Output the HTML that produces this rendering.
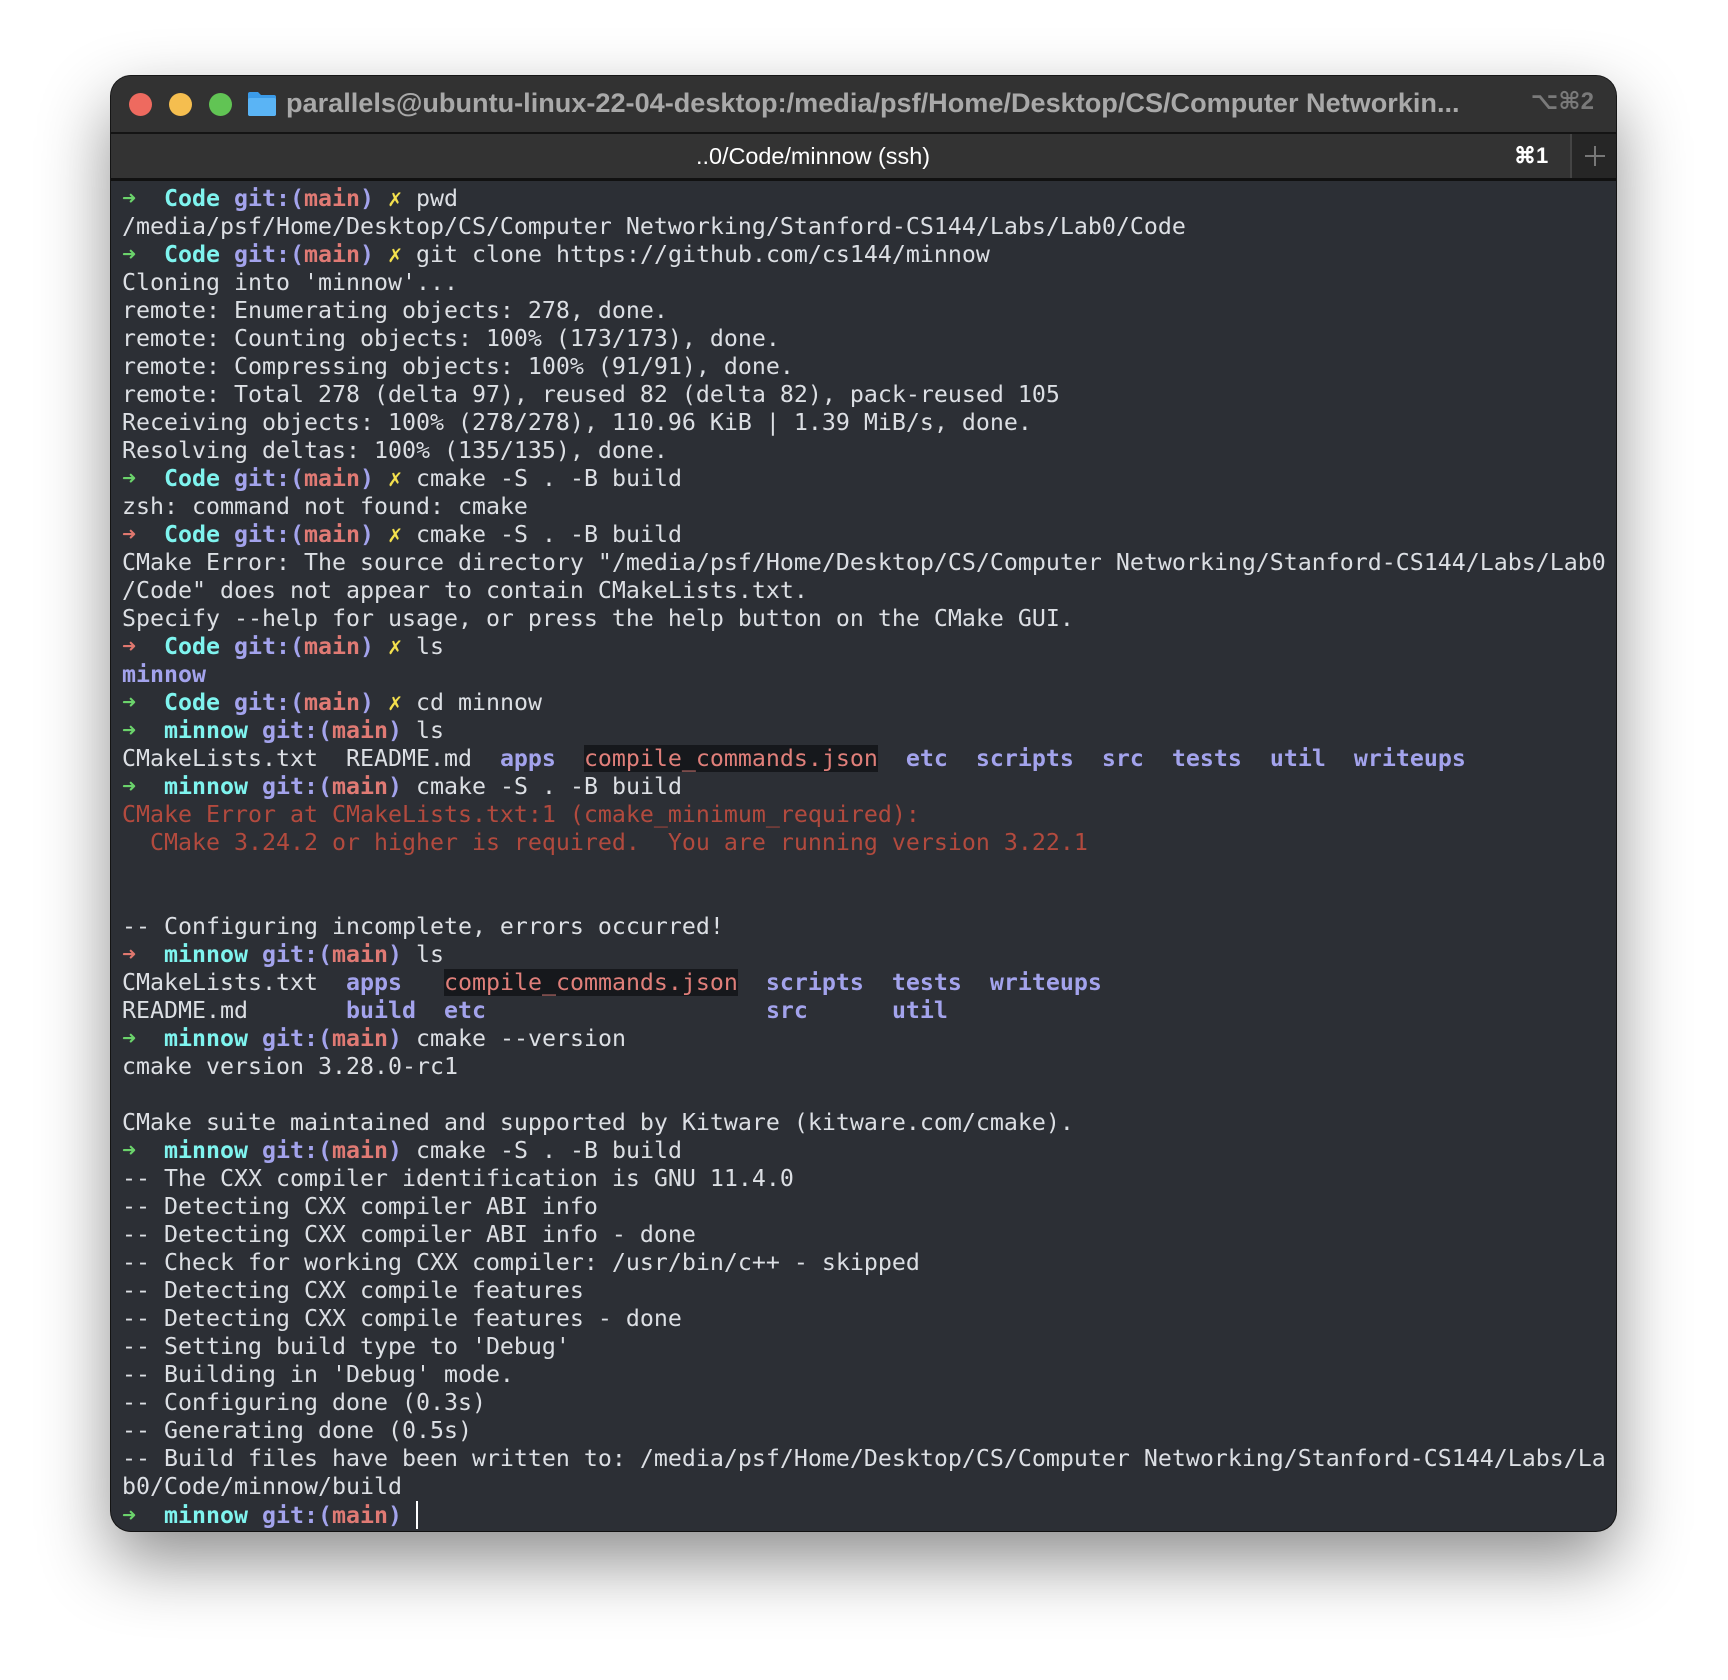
<!DOCTYPE html>
<html><head><meta charset="utf-8"><style>
html,body{margin:0;padding:0;width:1728px;height:1680px;background:#fff;overflow:hidden}
.win{position:absolute;left:111px;top:76px;width:1505px;height:1455px;border-radius:20px;background:#2c2f35;overflow:hidden;box-shadow:0 30px 70px rgba(0,0,0,.45),0 0 0 1px #1a1a1a;}
.title{position:absolute;left:0;top:0;width:100%;height:56px;background:#323232;border-bottom:2px solid #141414}
.dot{position:absolute;top:17px;width:23px;height:23px;border-radius:50%}
.ttext{position:absolute;left:175px;top:11px;font:bold 27.1px "Liberation Sans",sans-serif;color:#a9a9a9;white-space:nowrap}
.kbd{position:absolute;right:22px;top:11px;font:bold 24px "Liberation Sans","DejaVu Sans",sans-serif;color:#7a7a7a}
.tabs{position:absolute;left:0;top:58px;width:100%;height:44px;background:#333333;border-bottom:3px solid #111}
.tab{position:absolute;left:0;top:0;width:1458px;height:44px;color:#fff;font:23.4px "Liberation Sans",sans-serif}
.plus{position:absolute;left:1459px;top:0;width:46px;height:44px;background:#262626;border-left:2px solid #444}
pre{position:absolute;left:11px;top:109px;margin:0;font:23.25px/28px "DejaVu Sans Mono",monospace;color:#dcdfe4}
.g{color:#6bd36b;font-weight:bold}.r{color:#e0786f;font-weight:bold}
.c{color:#7ff4ef;font-weight:bold}.p{color:#a3a3ec;font-weight:bold}.m{color:#e07a74;font-weight:bold}
.y{color:#f4e04d;font-weight:bold}.d{color:#a3a3ec;font-weight:bold}
.h{background:#16181c;color:#e07f7a}.e{color:#b24a3e}
.cur{display:inline-block;width:2px;height:28px;background:#fff;vertical-align:-6px}
</style></head><body>
<div class="win">
 <div class="title">
  <div class="dot" style="left:18px;background:#ee6a5f"></div>
  <div class="dot" style="left:58px;background:#f5be4f"></div>
  <div class="dot" style="left:98px;background:#61c454"></div>
  <svg style="position:absolute;left:136px;top:15px" width="30" height="26" viewBox="0 0 30 26"><path d="M1 3a2 2 0 0 1 2-2h8l3 3h13a2 2 0 0 1 2 2v17a2 2 0 0 1-2 2H3a2 2 0 0 1-2-2z" fill="#3b9be8"/><rect x="1" y="7" width="28" height="18" rx="2" fill="#5ab4f5"/></svg>
  <div class="ttext">parallels@ubuntu-linux-22-04-desktop:/media/psf/Home/Desktop/CS/Computer Networkin...</div>
  <div class="kbd">⌥⌘2</div>
 </div>
 <div class="tabs">
  <div class="tab"><span style="position:absolute;left:585px;top:9px">..0/Code/minnow (ssh)</span><span style="position:absolute;left:1403px;top:9px;font-weight:bold;font-size:22px">⌘1</span></div>
  <div class="plus"><div style="position:absolute;left:13px;top:21px;width:20px;height:2px;background:#777"></div><div style="position:absolute;left:22px;top:12px;width:2px;height:20px;background:#777"></div></div>
 </div>
<pre><span class="g">➜</span>  <span class="c">Code</span> <span class="p">git:(</span><span class="m">main</span><span class="p">)</span> <span class="y">✗</span> pwd
/media/psf/Home/Desktop/CS/Computer Networking/Stanford-CS144/Labs/Lab0/Code
<span class="g">➜</span>  <span class="c">Code</span> <span class="p">git:(</span><span class="m">main</span><span class="p">)</span> <span class="y">✗</span> git clone https://github.com/cs144/minnow
Cloning into 'minnow'...
remote: Enumerating objects: 278, done.
remote: Counting objects: 100% (173/173), done.
remote: Compressing objects: 100% (91/91), done.
remote: Total 278 (delta 97), reused 82 (delta 82), pack-reused 105
Receiving objects: 100% (278/278), 110.96 KiB | 1.39 MiB/s, done.
Resolving deltas: 100% (135/135), done.
<span class="g">➜</span>  <span class="c">Code</span> <span class="p">git:(</span><span class="m">main</span><span class="p">)</span> <span class="y">✗</span> cmake -S . -B build
zsh: command not found: cmake
<span class="r">➜</span>  <span class="c">Code</span> <span class="p">git:(</span><span class="m">main</span><span class="p">)</span> <span class="y">✗</span> cmake -S . -B build
CMake Error: The source directory "/media/psf/Home/Desktop/CS/Computer Networking/Stanford-CS144/Labs/Lab0
/Code" does not appear to contain CMakeLists.txt.
Specify --help for usage, or press the help button on the CMake GUI.
<span class="r">➜</span>  <span class="c">Code</span> <span class="p">git:(</span><span class="m">main</span><span class="p">)</span> <span class="y">✗</span> ls
<span class="d">minnow</span>
<span class="g">➜</span>  <span class="c">Code</span> <span class="p">git:(</span><span class="m">main</span><span class="p">)</span> <span class="y">✗</span> cd minnow
<span class="g">➜</span>  <span class="c">minnow</span> <span class="p">git:(</span><span class="m">main</span><span class="p">)</span> ls
CMakeLists.txt  README.md  <span class="d">apps</span>  <span class="h">compile_commands.json</span>  <span class="d">etc</span>  <span class="d">scripts</span>  <span class="d">src</span>  <span class="d">tests</span>  <span class="d">util</span>  <span class="d">writeups</span>
<span class="g">➜</span>  <span class="c">minnow</span> <span class="p">git:(</span><span class="m">main</span><span class="p">)</span> cmake -S . -B build
<span class="e">CMake Error at CMakeLists.txt:1 (cmake_minimum_required):</span>
<span class="e">  CMake 3.24.2 or higher is required.  You are running version 3.22.1</span>


-- Configuring incomplete, errors occurred!
<span class="r">➜</span>  <span class="c">minnow</span> <span class="p">git:(</span><span class="m">main</span><span class="p">)</span> ls
CMakeLists.txt  <span class="d">apps</span>   <span class="h">compile_commands.json</span>  <span class="d">scripts</span>  <span class="d">tests</span>  <span class="d">writeups</span>
README.md       <span class="d">build</span>  <span class="d">etc</span>                    <span class="d">src</span>      <span class="d">util</span>
<span class="g">➜</span>  <span class="c">minnow</span> <span class="p">git:(</span><span class="m">main</span><span class="p">)</span> cmake --version
cmake version 3.28.0-rc1

CMake suite maintained and supported by Kitware (kitware.com/cmake).
<span class="g">➜</span>  <span class="c">minnow</span> <span class="p">git:(</span><span class="m">main</span><span class="p">)</span> cmake -S . -B build
-- The CXX compiler identification is GNU 11.4.0
-- Detecting CXX compiler ABI info
-- Detecting CXX compiler ABI info - done
-- Check for working CXX compiler: /usr/bin/c++ - skipped
-- Detecting CXX compile features
-- Detecting CXX compile features - done
-- Setting build type to 'Debug'
-- Building in 'Debug' mode.
-- Configuring done (0.3s)
-- Generating done (0.5s)
-- Build files have been written to: /media/psf/Home/Desktop/CS/Computer Networking/Stanford-CS144/Labs/La
b0/Code/minnow/build
<span class="g">➜</span>  <span class="c">minnow</span> <span class="p">git:(</span><span class="m">main</span><span class="p">)</span> <span class="cur"></span></pre>
</div>
</body></html>
